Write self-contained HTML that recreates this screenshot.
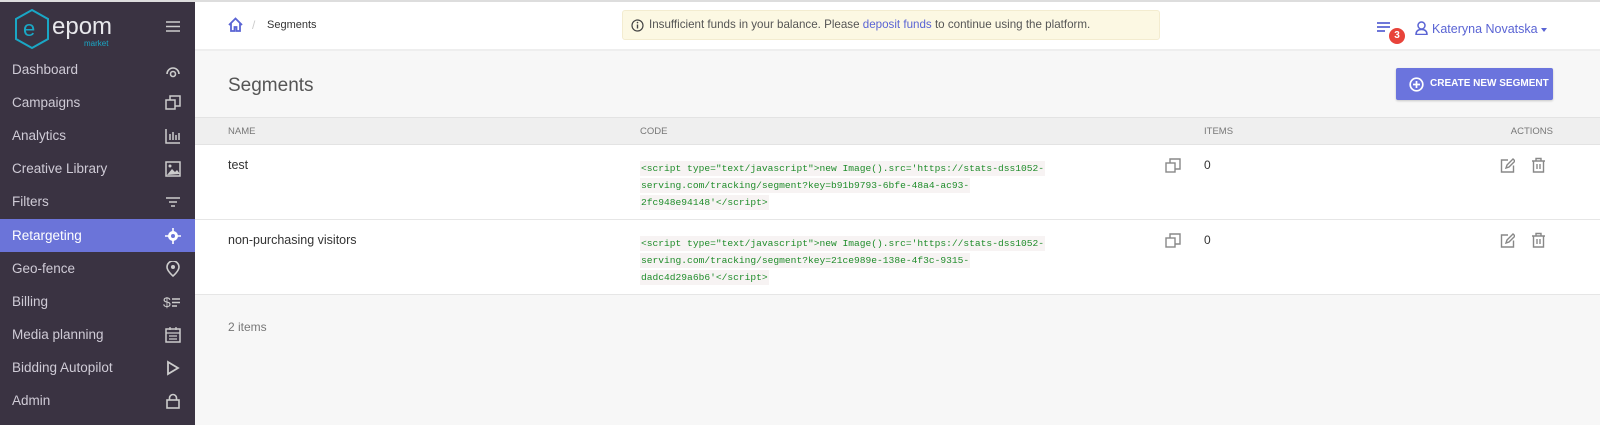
<!DOCTYPE html>
<html><head><meta charset="utf-8"><style>
*{box-sizing:border-box;margin:0;padding:0}
body{width:1600px;height:425px;overflow:hidden;font-family:"Liberation Sans",sans-serif;background:#f7f7f7;position:relative;font-size:13px;color:#333}
.side{position:absolute;left:0;top:0;width:195px;height:425px;background:#3a3342;border-top:2px solid #ddd}
.logo{position:absolute;left:12px;top:6px}
.item{position:absolute;left:0;width:195px;height:33px;color:#cfcbd6;font-size:13.5px;line-height:33px;padding-left:12px}
.item.act{background:#6b74d9;color:#fff}
.item svg{position:absolute;right:14px;top:9px}
.top{position:absolute;left:195px;top:0;right:0;height:51px;background:#fff;border-top:2px solid #ddd;border-bottom:2px solid #eee}
.alert{position:absolute;left:427px;top:8px;width:538px;height:30px;background:#fcf8e3;border:1px solid #f3ecd0;border-radius:3px;font-size:11.6px;color:#555;line-height:28px;padding-left:26px;white-space:nowrap}
.alert a{color:#5a64d4}
.th{position:absolute;left:195px;right:0;top:117px;height:28px;background:#efefef;border-top:1px solid #e3e3e3;border-bottom:1px solid #e3e3e3;font-size:9.5px;color:#777;line-height:27px}
.th span{position:absolute}
.row{position:absolute;left:195px;right:0;height:75px;background:#fff;border-bottom:1px solid #e6e6e6}
.name{position:absolute;left:33px;top:13px;font-size:12.5px;color:#333}
.code{position:absolute;left:445px;top:15px;font-family:"Liberation Mono",monospace;font-size:9.6px;line-height:17px;color:#1f8c2a}
.code span{background:#f7f3f3;padding:2px 1px}
.n0{position:absolute;left:1009px;top:13px;font-size:12px}
.btn{position:absolute;left:1396px;top:68px;width:157px;height:32px;background:#6b74dd;border-radius:2px;color:#fff;font-size:10px;font-weight:bold;line-height:32px;padding-left:34px;box-shadow:0 1px 2px rgba(0,0,0,.2);white-space:nowrap}
</style></head><body>
<div class="side">
 <svg class="logo" width="130" height="42" viewBox="0 0 130 42"><polygon points="20,2 36,11 36,31 20,40 4,31 4,11" fill="none" stroke="#1aa7c5" stroke-width="2"/><text x="11" y="28" font-size="22" fill="#1aa7c5" font-family="Liberation Sans">e</text><text x="40" y="26" font-size="24" fill="#e8e8ec" font-family="Liberation Sans">epom</text><text x="72" y="38" font-size="8" fill="#1aa7c5" font-family="Liberation Sans">market</text></svg>
 <svg style="position:absolute;left:166px;top:19px" width="14" height="11"><path d="M0 1h14M0 5.5h14M0 10h14" stroke="#ccc" stroke-width="1.6"/></svg>
 <div class="item" style="top:51px">Dashboard<svg width="16" height="16"><path d="M2 12a6 6 0 1 1 12 0" fill="none" stroke="#ccc" stroke-width="1.6"/><circle cx="8" cy="12" r="2.5" fill="none" stroke="#ccc" stroke-width="1.6"/></svg></div>
 <div class="item" style="top:84px">Campaigns<svg width="16" height="16"><rect x="1" y="5" width="9" height="9" fill="none" stroke="#ccc" stroke-width="1.5"/><path d="M5 5V1h10v10h-5" fill="none" stroke="#ccc" stroke-width="1.5"/></svg></div>
 <div class="item" style="top:117px">Analytics<svg width="16" height="16"><path d="M1 1v14h14M5 12V6M8 12V4M11 12V7M14 12V5" stroke="#ccc" stroke-width="1.5" fill="none"/></svg></div>
 <div class="item" style="top:150px">Creative Library<svg width="16" height="16"><rect x="1" y="1" width="14" height="14" fill="none" stroke="#ccc" stroke-width="1.5"/><path d="M2 14l5-6 3 3 2-2 3 4z" fill="#ccc"/><circle cx="5" cy="5" r="1.5" fill="#ccc"/></svg></div>
 <div class="item" style="top:183px">Filters<svg width="16" height="16"><path d="M1 4h14M4 8h8M6 12h4" stroke="#ccc" stroke-width="1.6"/></svg></div>
 <div class="item act" style="top:217px">Retargeting<svg width="16" height="16"><circle cx="8" cy="8" r="5" fill="#fff"/><circle cx="8" cy="8" r="2" fill="#6b74d9"/><path d="M8 0v4M8 12v4M0 8h4M12 8h4" stroke="#fff" stroke-width="1.6"/></svg></div>
 <div class="item" style="top:250px">Geo-fence<svg width="16" height="16"><path d="M8 15s6-5 6-9A6 6 0 0 0 2 6c0 4 6 9 6 9z" fill="none" stroke="#ccc" stroke-width="1.6"/><circle cx="8" cy="6" r="2" fill="#ccc"/></svg></div>
 <div class="item" style="top:283px">Billing<svg width="18" height="16"><text x="0" y="13" font-size="14" fill="#ccc" font-family="Liberation Sans">$</text><path d="M9 5h8M9 8.5h8M9 12h5" stroke="#ccc" stroke-width="1.4"/></svg></div>
 <div class="item" style="top:316px">Media planning<svg width="16" height="16"><rect x="1" y="2" width="14" height="13" fill="none" stroke="#ccc" stroke-width="1.5"/><path d="M1 6h14M4 9h8M4 12h8M5 0v3M11 0v3" stroke="#ccc" stroke-width="1.3"/></svg></div>
 <div class="item" style="top:349px">Bidding Autopilot<svg width="16" height="16"><path d="M3 2l10 6-10 6z" fill="none" stroke="#ccc" stroke-width="1.8"/></svg></div>
 <div class="item" style="top:382px">Admin<svg width="16" height="16"><rect x="2" y="7" width="12" height="8" fill="none" stroke="#ccc" stroke-width="1.6"/><path d="M4.5 7V5a3.5 3.5 0 0 1 7 0v2" fill="none" stroke="#ccc" stroke-width="1.6"/></svg></div>
</div>
<div class="top">
 <svg style="position:absolute;left:33px;top:15px" width="15" height="15"><path d="M1 8L7.5 1.5 14 8M3 6.5V14h3.5v-4h2v4H12V6.5" fill="none" stroke="#5a64d4" stroke-width="1.8"/></svg>
 <span style="position:absolute;left:57px;top:16px;color:#ccc;font-size:12px">/</span>
 <span style="position:absolute;left:72px;top:17px;font-size:11px;color:#333">Segments</span>
 <div class="alert"><svg style="position:absolute;left:8px;top:8px" width="13" height="13"><circle cx="6.5" cy="6.5" r="5.5" fill="none" stroke="#444" stroke-width="1.2"/><path d="M6.5 5.5v4" stroke="#444" stroke-width="1.4"/><circle cx="6.5" cy="3.6" r=".8" fill="#444"/></svg>Insufficient funds in your balance. Please <a>deposit funds</a> to continue using the platform.</div>
 <svg style="position:absolute;left:1182px;top:20px" width="14" height="11"><path d="M0 1h13M0 5h13M0 9h8" stroke="#5a64d4" stroke-width="1.8"/></svg>
 <div style="position:absolute;left:1194px;top:26px;width:16px;height:16px;border-radius:50%;background:#e8433a;color:#fff;font-size:10px;font-weight:bold;text-align:center;line-height:16px">3</div>
 <svg style="position:absolute;left:1220px;top:19px" width="13" height="14"><circle cx="6.5" cy="4.5" r="3.5" fill="none" stroke="#5a64d4" stroke-width="1.5"/><path d="M1 13.5c0-4 2.5-5 5.5-5s5.5 1 5.5 5z" fill="none" stroke="#5a64d4" stroke-width="1.5"/></svg>
 <span style="position:absolute;left:1237px;top:20px;color:#5a64d4;font-size:12.5px">Kateryna Novatska</span>
 <span style="position:absolute;left:1346px;top:26px;border:3.5px solid transparent;border-top:4px solid #5a64d4"></span>
</div>
<div style="position:absolute;left:228px;top:75px;font-size:19px;color:#555">Segments</div>
<div class="btn"><svg style="position:absolute;left:13px;top:9px" width="15" height="15"><circle cx="7.5" cy="7.5" r="6.3" fill="none" stroke="#fff" stroke-width="1.7"/><path d="M7.5 4v7M4 7.5h7" stroke="#fff" stroke-width="1.7"/></svg>CREATE NEW SEGMENT</div>
<div class="th"><span style="left:33px">NAME</span><span style="left:445px">CODE</span><span style="left:1009px">ITEMS</span><span style="right:47px">ACTIONS</span></div>
<div class="row" style="top:145px">
 <div class="name">test</div>
 <div class="code"><span>&lt;script type="text/javascript"&gt;new Image().src='https://stats-dss1052-</span><br><span>serving.com/tracking/segment?key=b91b9793-6bfe-48a4-ac93-</span><br><span>2fc948e94148'&lt;/script&gt;</span></div>
 <svg style="position:absolute;left:970px;top:13px" width="16" height="16"><rect x="1" y="5" width="9" height="9" fill="none" stroke="#888" stroke-width="1.4"/><path d="M5 5V1h10v10h-5" fill="none" stroke="#888" stroke-width="1.4"/></svg>
 <div class="n0">0</div>
 <svg style="position:absolute;left:1305px;top:13px" width="15" height="15"><path d="M8 2H1.5v12h12V7.5" fill="none" stroke="#888" stroke-width="1.4"/><path d="M6 10l1-3 6-6 2 2-6 6z" fill="none" stroke="#888" stroke-width="1.4"/></svg>
 <svg style="position:absolute;left:1336px;top:12px" width="15" height="16"><path d="M1 4h13M5 4V1.5h5V4M2.5 4v11h10V4M6 7v5M9 7v5" fill="none" stroke="#888" stroke-width="1.4"/></svg>
</div>
<div class="row" style="top:220px">
 <div class="name">non-purchasing visitors</div>
 <div class="code"><span>&lt;script type="text/javascript"&gt;new Image().src='https://stats-dss1052-</span><br><span>serving.com/tracking/segment?key=21ce989e-138e-4f3c-9315-</span><br><span>dadc4d29a6b6'&lt;/script&gt;</span></div>
 <svg style="position:absolute;left:970px;top:13px" width="16" height="16"><rect x="1" y="5" width="9" height="9" fill="none" stroke="#888" stroke-width="1.4"/><path d="M5 5V1h10v10h-5" fill="none" stroke="#888" stroke-width="1.4"/></svg>
 <div class="n0">0</div>
 <svg style="position:absolute;left:1305px;top:13px" width="15" height="15"><path d="M8 2H1.5v12h12V7.5" fill="none" stroke="#888" stroke-width="1.4"/><path d="M6 10l1-3 6-6 2 2-6 6z" fill="none" stroke="#888" stroke-width="1.4"/></svg>
 <svg style="position:absolute;left:1336px;top:12px" width="15" height="16"><path d="M1 4h13M5 4V1.5h5V4M2.5 4v11h10V4M6 7v5M9 7v5" fill="none" stroke="#888" stroke-width="1.4"/></svg>
</div>
<div style="position:absolute;left:228px;top:320px;font-size:12px;color:#777">2 items</div>
</body></html>
